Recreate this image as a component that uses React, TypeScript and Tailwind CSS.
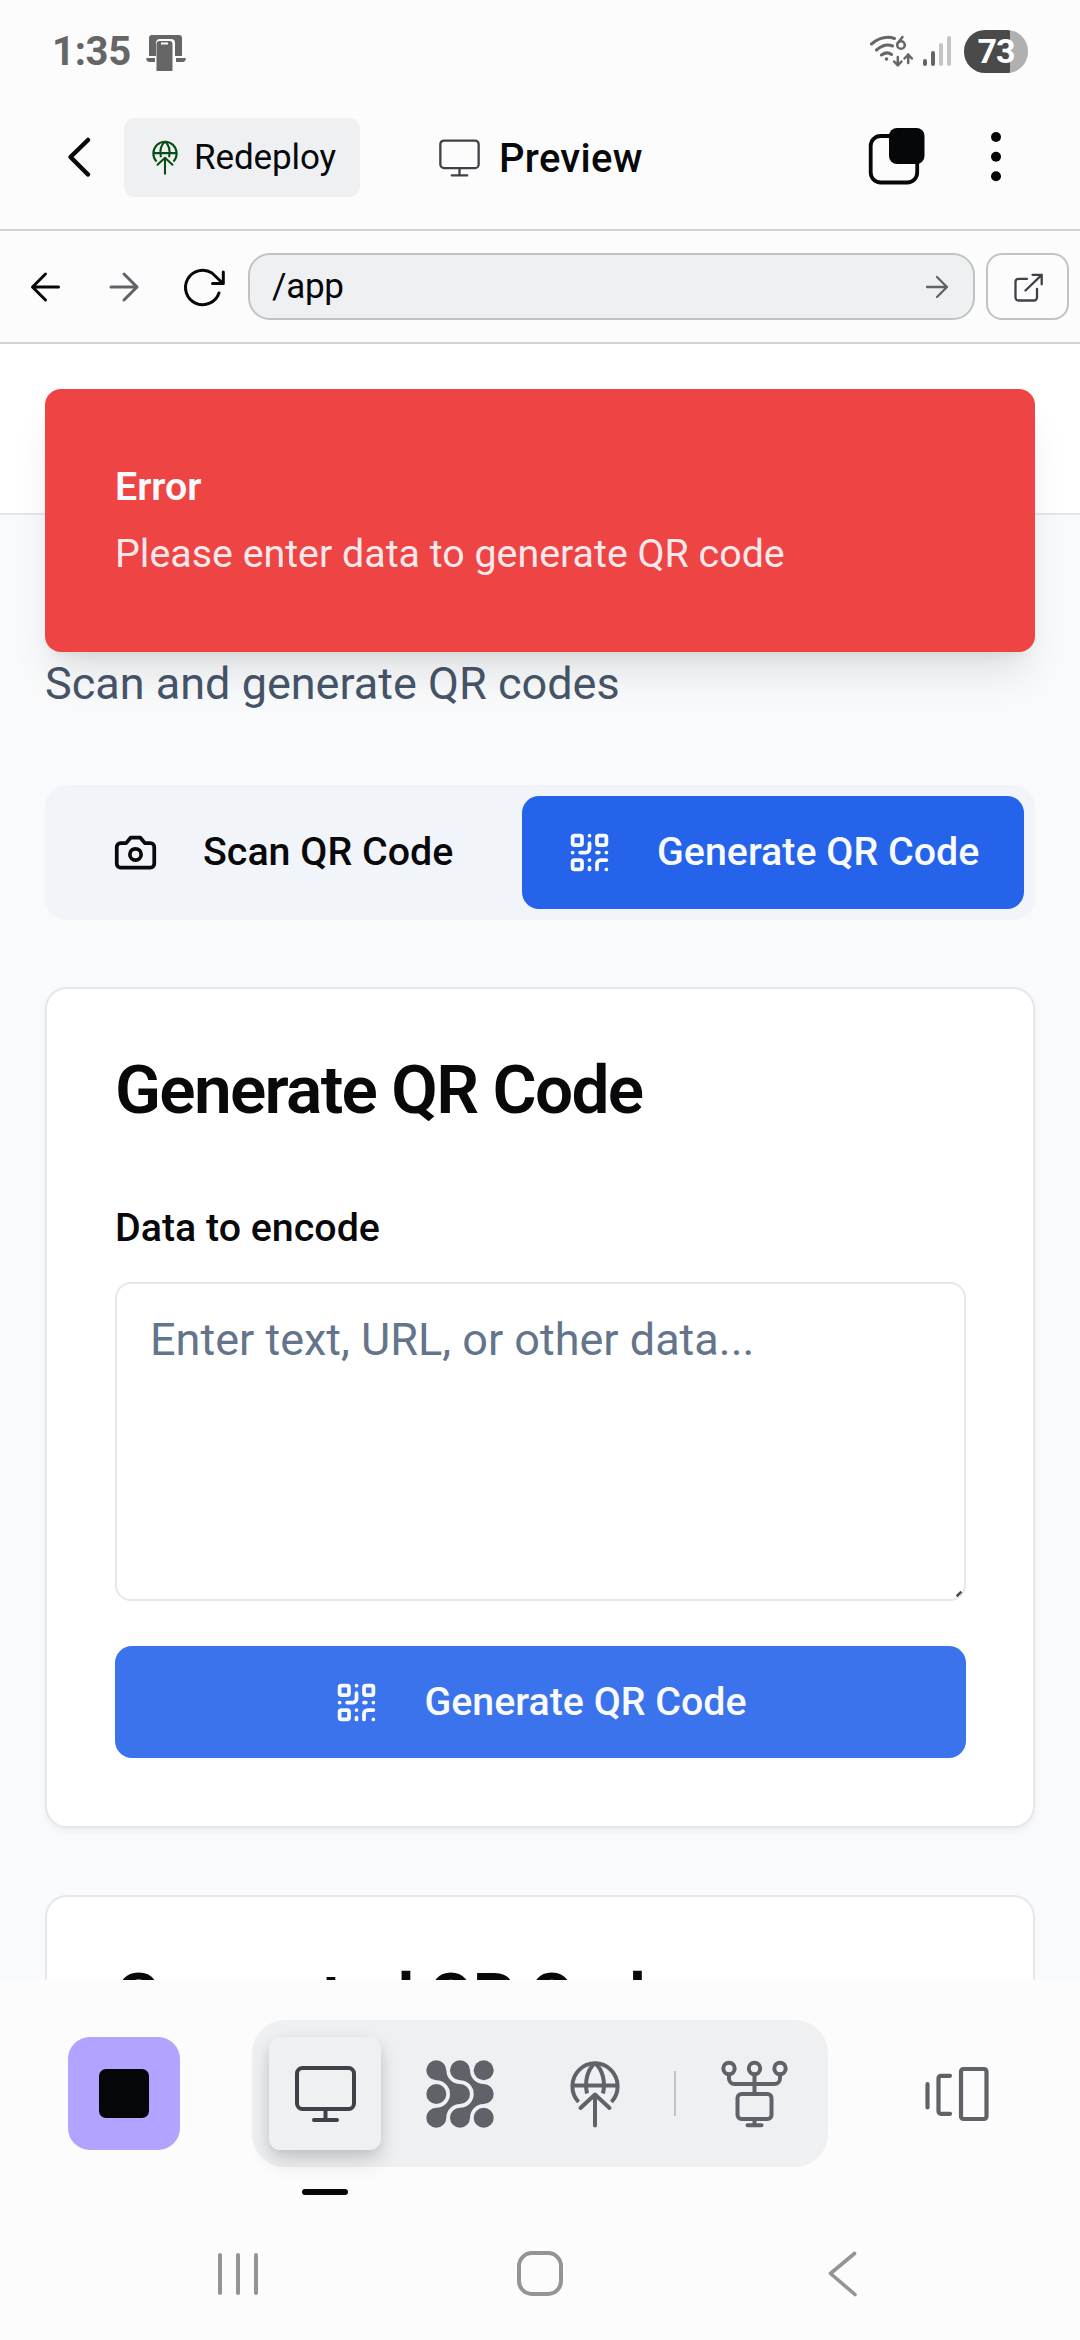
import React from "react";

type IconProps = { className?: string };

const line = {
  fill: "none",
  stroke: "currentColor",
  strokeLinecap: "round" as const,
  strokeLinejoin: "round" as const,
};

function LinkedDevices() {
  return (
    <svg className="h-[38px] w-[40px]" viewBox="0 0 40 38" fill="#666">
      <path d="M3 22V4a3 3 0 0 1 3-3h27a3 3 0 0 1 3 3v18h-7V9a4 4 0 0 0-4-4H14a4 4 0 0 0-4 4v13zM.5 24H9v4H3a3 3 0 0 1-2.500-4zM30 24h9.500a3 3 0 0 1-3 4H30z" />
      <path d="M10.500 10a3 3 0 0 1 3-3h10a3 3 0 0 1 3 3v27h-16zM15 8.500v2h7v-2z" fillRule="evenodd" />
    </svg>
  );
}

function Wifi6() {
  return (
    <svg className="h-[36px] w-[46px]" viewBox="869 33 46 36" fill="none" stroke="#666" strokeLinecap="round" strokeLinejoin="round">
      <g strokeWidth="3">
        <path d="M871.500 44q11.500-9.500 23-5.500M876.500 50q8.500-7 16-4M881.500 55q5.500-4 10-.5" />
        <path d="M897.800 57v8m-3.700-3.500 3.700 4 3.700-4M908.200 63v-8.500m-3.700 4 3.700-4 3.700 4" strokeWidth="2.500" />
        <circle cx="901" cy="45" r="3.800" strokeWidth="2.500" />
        <path d="M897.500 43.500 902.500 37" strokeWidth="2.500" />
      </g>
      <circle cx="886.500" cy="59" r="1.800" fill="#666" stroke="none" />
    </svg>
  );
}

function Signal() {
  return (
    <div className="flex h-[30px] items-end gap-[4px]">
      <div className="h-[7px] w-[4px] rounded-full bg-[#666]" />
      <div className="h-[15px] w-[4px] rounded-full bg-[#666]" />
      <div className="h-[23px] w-[4px] rounded-full bg-[#c4c4c4]" />
      <div className="h-[30px] w-[4px] rounded-full bg-[#c4c4c4]" />
    </div>
  );
}

function Deploy({ className }: IconProps) {
  return (
    <svg className={className} viewBox="0 0 50 68" {...line} strokeWidth="4">
      <g strokeLinecap="butt">
        <path d="M8.500 42A22.600 23 0 1 1 41.500 42" />
        <path d="M2.500 25.500h45M25 3C17 10 14.500 22 17 33.500M25 3c8 7 10.500 19 8 30.500" />
      </g>
      <path d="M25 34.500V65.500M10.500 48 25 34.500 39.500 48" />
    </svg>
  );
}

function Monitor({ className, weight }: IconProps & { weight: number }) {
  return (
    <svg className={className} viewBox="0 0 61 56" {...line} strokeWidth={weight}>
      <rect x="2" y="2" width="57" height="41" rx="5.500" />
      <path d="M30.500 43v11M19 54h23" />
    </svg>
  );
}

function QrIcon() {
  return (
    <svg className="h-[45px] w-[45px]" viewBox="0 0 24 24" {...line} strokeWidth="2">
      <rect width="5" height="5" x="3" y="3" rx="1" />
      <rect width="5" height="5" x="16" y="3" rx="1" />
      <rect width="5" height="5" x="3" y="16" rx="1" />
      <path d="M21 16h-3a2 2 0 0 0-2 2v3M21 21v.01M12 7v3a2 2 0 0 1-2 2H7M3 12h.01M12 3h.01M12 16v.01M16 12h1M21 12v.01M12 21v-1" />
    </svg>
  );
}

function Camera() {
  return (
    <svg className="h-[45px] w-[45px]" viewBox="0 0 24 24" {...line} strokeWidth="2">
      <path d="M14.500 4h-5L7 7H4a2 2 0 0 0-2 2v9a2 2 0 0 0 2 2h16a2 2 0 0 0 2-2V9a2 2 0 0 0-2-2h-3l-2.500-3z" />
      <circle cx="12" cy="13" r="3" />
    </svg>
  );
}

function Mesh() {
  const blob =
    "M0-10A10 10 0 0 1 10 0A13.700 13.700 0 0 0 23.700 13.700A10 10 0 0 1 23.700 33.700A13.700 13.700 0 0 0 10 47.400A10 10 0 1 1 0 37.400A13.700 13.700 0 0 0 0 10A10 10 0 0 1 0-10z";
  return (
    <svg className="h-[68px] w-[68px]" viewBox="-10.300 -10.300 68 68" fill="#5f6269">
      <path d={blob} />
      <path d={blob} transform="translate(23.700 0)" />
      <circle cx="0" cy="23.700" r="10" />
      <circle cx="47.400" cy="0" r="10" />
      <circle cx="47.400" cy="47.400" r="10" />
    </svg>
  );
}

function Network() {
  return (
    <svg className="h-[68px] w-[67px]" viewBox="0 0 67 68" {...line} strokeWidth="4">
      <circle cx="8" cy="8.500" r="5.700" />
      <circle cx="33.500" cy="8.500" r="5.700" />
      <circle cx="59" cy="8.500" r="5.700" />
      <path d="M8 14.500v4a5.500 5.500 0 0 0 5.500 5.500h40a5.500 5.500 0 0 0 5.500-5.500v-4M33.500 14.500V34M33.500 59v6M26.500 65.200h14" />
      <rect x="16.500" y="34" width="34" height="25" rx="4" />
    </svg>
  );
}

function Stack() {
  return (
    <svg className="h-[56px] w-[64px] text-[#5f6269]" viewBox="925 2066 64 56" {...line} strokeWidth="4.200">
      <path d="M927.500 2084v23.500M950 2075.800h-9a2.500 2.500 0 0 0-2.500 2.500v33a2.500 2.500 0 0 0 2.500 2.500h9" />
      <rect x="961" y="2069" width="25.500" height="50" rx="2.500" />
    </svg>
  );
}

function StatusBar() {
  return (
    <div className="flex h-[102px] items-start pl-[52px] pr-[52px] pt-[30px]">
      <div className="h-[44px] w-[94px] text-[40px] font-bold leading-[44px] tracking-[-0.300px] text-[#666]">1:35</div>
      <div className="mt-[4px]"><LinkedDevices /></div>
      <div className="ml-auto mt-[3px] flex">
        <Wifi6 />
        <div className="ml-[8px] mt-[3px]"><Signal /></div>
      </div>
      <div className="ml-[13px] flex h-[43px] w-[64px] items-center justify-center rounded-[21px] bg-[linear-gradient(90deg,#4a4a4a_0_46px,#b0b0b0_46px)] text-[34px] font-bold tracking-[-1px] text-white">
        73
      </div>
    </div>
  );
}

function Header() {
  return (
    <div className="flex h-[129px] items-start border-b-2 border-[#d1d3d3] pl-[66px] pt-[16px]">
      <svg className="mt-[17px] h-[44px] w-[26px] text-[#07090b]" viewBox="66 135 26 44" {...line} strokeWidth="4.500">
        <path d="M88 140 70.500 157 88 174.500" />
      </svg>
      <div className="ml-[32px] flex h-[79px] w-[236px] items-center rounded-[11px] bg-[#eff0f2] pl-[28px] text-[#064e17]">
        <Deploy className="h-[35px] w-[26px]" />
        <span className="ml-[16px] text-[35px] leading-[40px] tracking-[-0.100px] text-[#07090b]">Redeploy</span>
      </div>
      <Monitor className="ml-[79px] mt-[21px] h-[38px] w-[41px] text-[#3f4148]" weight={3.4} />
      <span className="ml-[19px] mt-[17px] text-[40px] font-medium leading-[48px] tracking-[0.300px] text-[#07090b]">Preview</span>
      <svg className="ml-auto mt-[9px] h-[58px] w-[58px]" viewBox="868 127 58 58" fill="none">
        <rect x="870.700" y="136" width="46.500" height="46.500" rx="10" stroke="#050709" strokeWidth="3.800" />
        <rect x="889" y="128" width="35.500" height="36" rx="8" fill="#050709" />
      </svg>
      <svg className="ml-[64px] mr-[78px] mt-[12px] h-[54px] w-[12px]" viewBox="990 130 12 54" fill="#050709">
        <circle cx="996" cy="137" r="5" />
        <circle cx="996" cy="156.700" r="5" />
        <circle cx="996" cy="176.300" r="5" />
      </svg>
    </div>
  );
}

function AddressBar() {
  return (
    <div className="flex h-[113px] items-center border-b-2 border-[#d1d3d3] text-[#050709]">
      <svg className="ml-[28px] h-[36px] w-[36px]" viewBox="28 268.500 36 36" {...line} strokeWidth="3">
        <path d="M58.500 286.500H32.500M45.500 273.500 32.500 286.500 45.500 299.500" />
      </svg>
      <svg className="ml-[42px] h-[36px] w-[36px] text-[#5f6269]" viewBox="106 268.500 36 36" {...line} strokeWidth="3">
        <path d="M111 286.500h26M124 273.500 137 286.500 124 299.500" />
      </svg>
      <svg className="ml-[40px] h-[44px] w-[46px]" viewBox="182 264.500 46 44" {...line} strokeWidth="3">
        <path d="M219 292.500A17.200 17.200 0 1 1 212 272.500L222.500 282.500M223.300 271.500V283H212.500" />
      </svg>
      <div className="ml-[20px] flex h-[67px] w-[727px] items-center rounded-[22px] border-2 border-[#bfc3c3] bg-[#eff0f2] pl-[22px]">
        <span className="text-[35px] leading-[44px] tracking-[-0.300px]">/app</span>
        <svg className="ml-auto mr-[22px] h-[28px] w-[28px] text-[#5f6269]" viewBox="924 272.500 28 28" {...line} strokeWidth="2.300">
          <path d="M928 286.500h20M938 276.500 948 286.500 938 296.500" />
        </svg>
      </div>
      <div className="ml-[11px] flex h-[67px] w-[83px] items-center justify-center rounded-[16px] border-2 border-[#bfc3c3] text-[#3f4148]">
        <svg className="h-[32px] w-[34px]" viewBox="1010.500 270.500 34 32" {...line} strokeWidth="2.300">
          <path d="M1026.500 278.300H1018a3 3 0 0 0-3 3v15.700a3 3 0 0 0 3 3h15.500a3 3 0 0 0 3-3V288.500M1025 290l16.200-15.700M1032 274.300h9.200v9.500" />
        </svg>
      </div>
    </div>
  );
}

function Toast() {
  return (
    <div className="absolute left-[45px] top-[45px] flex h-[263px] w-[990px] flex-col gap-[11px] rounded-[16px] bg-[#ef4444] pl-[70px] pt-[70px] text-[39.375px] leading-[56px] shadow-[0_28px_42px_-8px_rgba(0,0,0,0.1),0_11px_17px_-11px_rgba(0,0,0,0.1)]">
      <div className="font-semibold text-[#f8fafc]">Error</div>
      <div className="text-[#f8fafc] opacity-90">Please enter data to generate QR code</div>
    </div>
  );
}

function AppView() {
  return (
    <div className="relative h-[1636px] overflow-hidden bg-[#f8fafc]">
      <div className="h-[171px] border-b-2 border-[#e2e8f0] bg-white" />
      <div className="px-[45px] pt-[135px]">
        <p className="h-[67px] text-[45px] leading-[67px] text-[#475569]">Scan and generate QR codes</p>

        <div className="mt-[68px] flex h-[135px] rounded-[22px] bg-[#f1f5f9] p-[11px] text-[39.375px] font-medium">
          <div className="flex h-[113px] w-[466px] items-center pl-[57px] text-[#09090b]">
            <Camera />
            <span className="mb-[2px] ml-[45px]">Scan QR Code</span>
          </div>
          <div className="flex h-[113px] w-[502px] items-center rounded-[17px] bg-[#2563eb] pl-[45px] text-[#f8fafc]">
            <QrIcon />
            <span className="mb-[2px] ml-[45px]">Generate QR Code</span>
          </div>
        </div>

        <div className="mt-[67px] h-[841px] rounded-[22px] border-2 border-[#e5e7eb] bg-white pl-[68px] pr-[67px] pt-[67px] text-[#09090b] shadow-[0_3px_6px_rgba(0,0,0,0.05)]">
          <h3 className="text-[67.500px] font-semibold leading-[68px] tracking-[-0.025em]">Generate QR Code</h3>
          <div className="mt-[76px] text-[39.375px] font-medium leading-[56px]">Data to encode</div>
          <div className="relative mt-[26px] h-[319px] rounded-[16px] border-2 border-[#e5e7eb] pl-[33px] pt-[22px] text-[45px] leading-[67px] text-[#64748b]">
            Enter text, URL, or other data...
            <svg className="absolute bottom-[2px] right-[2px] h-[6px] w-[6px]" viewBox="0 0 6 6">
              <path d="M1.500 4.500 4.500 1.500" stroke="#4b4b4b" strokeWidth="2.500" strokeLinecap="square" />
            </svg>
          </div>
          <div className="mt-[45px] flex h-[112px] items-center justify-center gap-[45px] rounded-[17px] bg-[#3b73ed] text-[39.375px] font-medium text-[#f8fafc]">
            <QrIcon />
            <span>Generate QR Code</span>
          </div>
        </div>

        <div className="mt-[67px] h-[400px] rounded-[22px] border-2 border-[#e5e7eb] bg-white px-[68px] pt-[67px] text-[#09090b]">
          <h3 className="text-[67.500px] font-semibold leading-[68px] tracking-[-0.025em]">Generated QR Code</h3>
        </div>
      </div>
      <Toast />
    </div>
  );
}

function Dock() {
  return (
    <div className="flex h-[220px] items-start pl-[68px] pt-[40px] text-[#5f6269]">
      <div className="mt-[17px] flex h-[113px] w-[112px] items-center justify-center rounded-[22px] bg-[#b1a3ff]">
        <div className="h-[49px] w-[50px] rounded-[7px] bg-[#050709]" />
      </div>
      <div className="ml-[72px] flex h-[147px] w-[576px] items-center rounded-[33px] bg-[#eff0f2]">
        <div className="relative ml-[17px] flex h-[113px] w-[112px] items-center justify-center rounded-[11px] bg-[#eff0f2] shadow-[0_11px_22px_rgba(0,0,0,0.14),0_4px_11px_rgba(0,0,0,0.08)]">
          <Monitor className="h-[56px] w-[61px] text-[#3f4148]" weight={4} />
          <div className="absolute left-[33px] top-[152px] h-[6px] w-[46px] rounded-full bg-[#050709]" />
        </div>
        <div className="ml-[45px]"><Mesh /></div>
        <Deploy className="ml-[76px] h-[68px] w-[50px]" />
        <div className="ml-[54px] h-[45px] w-[2px] bg-[#c2c5c7]" />
        <div className="ml-[45px]"><Network /></div>
      </div>
      <div className="ml-[97px] mt-[46px]"><Stack /></div>
    </div>
  );
}

function SystemNav() {
  return (
    <div className="flex h-[140px] items-start pl-[218px] pt-[50px] text-[#949494]">
      <div className="mt-[3px] flex gap-[14px]">
        <div className="h-[42px] w-[4px] rounded-full bg-[#949494]" />
        <div className="h-[42px] w-[4px] rounded-full bg-[#949494]" />
        <div className="h-[42px] w-[4px] rounded-full bg-[#949494]" />
      </div>
      <div className="ml-[259px] mt-[1px] h-[45px] w-[46px] rounded-[15px] border-[4px] border-[#949494]" />
      <svg className="ml-[264px] h-[48px] w-[32px]" viewBox="827 2250 32 48" {...line} strokeWidth="3.600">
        <path d="M854.500 2253.500 830.500 2273.500 855 2294.500" />
      </svg>
    </div>
  );
}

export default function App() {
  return (
    <div className="h-[2340px] w-[1080px] overflow-hidden bg-[#fcfcfc] font-['Roboto',sans-serif]">
      <StatusBar />
      <Header />
      <AddressBar />
      <AppView />
      <Dock />
      <SystemNav />
    </div>
  );
}
